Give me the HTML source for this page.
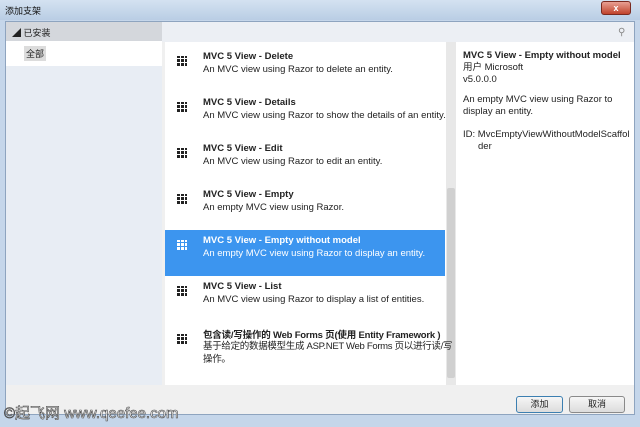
<!DOCTYPE html>
<html><head><meta charset="utf-8"><style>
*{margin:0;padding:0;box-sizing:border-box}
body{width:640px;height:427px;overflow:hidden;background:#c5d6ea;font-family:"Liberation Sans","Noto Sans CJK SC",sans-serif;font-size:9.5px;color:#222;position:relative}
.a{position:absolute}
.t{font-weight:bold;font-size:9.5px}
.icon{width:10px;height:10px;background:repeating-linear-gradient(90deg,#222 0 3px,transparent 3px 4px);}
.icon:after{content:"";position:absolute;inset:0;background:repeating-linear-gradient(0deg,transparent 0 3px,#fff 3px 4px)}
.sel .icon:after{background:repeating-linear-gradient(0deg,transparent 0 3px,#3c95ef 3px 4px)}
.sel .icon{background:repeating-linear-gradient(90deg,#fff 0 3px,transparent 3px 4px)}
.btn{border:1px solid #8a8a8a;border-radius:3px;background:linear-gradient(#f6f6f6,#dcdcdc);text-align:center;line-height:15px;font-size:9px}
</style></head><body>
<div class="a" style="left:0;top:0;width:640px;height:20px;background:linear-gradient(#d4e2f1,#b9cde4)"></div>
<div class="a" style="left:5px;top:4px;font-size:9px;color:#111">添加支架</div>
<div class="a" style="left:601px;top:1px;width:30px;height:14px;border-radius:3px;background:linear-gradient(#e8a093,#c0432c);border:1px solid #7a2a20;color:#fff;font-size:9px;text-align:center;line-height:12px;font-weight:bold">x</div>
<div class="a" style="left:5px;top:21px;width:630px;height:394px;background:#f0f0f0;border:1px solid #8ea4bf"></div>
<div class="a" style="left:6px;top:22px;width:156px;height:363px;background:#e8edf4"></div>
<div class="a" style="left:6px;top:22px;width:156px;height:19px;background:#d4d7dc"></div>
<div class="a" style="left:12px;top:26px;font-size:9px">◢ 已安装</div>
<div class="a" style="left:6px;top:41px;width:156px;height:25px;background:#fff"></div>
<div class="a" style="left:24px;top:46px;padding:1px 2px;background:#dcdcdc;font-size:9px">全部</div>
<div class="a" style="left:162px;top:22px;width:472px;height:20px;background:#eceff4"></div>
<div class="a" style="left:618px;top:27px;font-size:10px;color:#888">⚲</div>
<div class="a" style="left:165px;top:42px;width:281px;height:343px;background:#fff"></div>
<div class="a" style="left:446px;top:42px;width:10px;height:343px;background:#e8e8e8"></div>
<div class="a" style="left:447px;top:188px;width:8px;height:190px;background:#d0d0d0;border-radius:2px"></div>
<div class="a" style="left:456px;top:42px;width:178px;height:343px;background:#fff"></div>
<div class="a" style="left:165px;top:230px;width:280px;height:46px;background:#3c95ef"></div>

<div class="a" style="left:177px;top:56px"><div class="icon a"></div></div>
<div class="a t" style="left:203px;top:51px">MVC 5 View - Delete</div>
<div class="a" style="left:203px;top:64px">An MVC view using Razor to delete an entity.</div>
<div class="a" style="left:177px;top:102px"><div class="icon a"></div></div>
<div class="a t" style="left:203px;top:97px">MVC 5 View - Details</div>
<div class="a" style="left:203px;top:110px">An MVC view using Razor to show the details of an entity.</div>
<div class="a" style="left:177px;top:148px"><div class="icon a"></div></div>
<div class="a t" style="left:203px;top:143px">MVC 5 View - Edit</div>
<div class="a" style="left:203px;top:156px">An MVC view using Razor to edit an entity.</div>
<div class="a" style="left:177px;top:194px"><div class="icon a"></div></div>
<div class="a t" style="left:203px;top:189px">MVC 5 View - Empty</div>
<div class="a" style="left:203px;top:202px">An empty MVC view using Razor.</div>
<div class="a sel" style="left:177px;top:240px"><div class="icon a"></div></div>
<div class="a t" style="left:203px;top:235px;color:#fff">MVC 5 View - Empty without model</div>
<div class="a" style="left:203px;top:248px;color:#fff">An empty MVC view using Razor to display an entity.</div>
<div class="a" style="left:177px;top:286px"><div class="icon a"></div></div>
<div class="a t" style="left:203px;top:281px">MVC 5 View - List</div>
<div class="a" style="left:203px;top:294px">An MVC view using Razor to display a list of entities.</div>
<div class="a" style="left:177px;top:334px"><div class="icon a"></div></div>
<div class="a t" style="left:203px;top:327px;letter-spacing:-0.2px">包含读/写操作的 Web Forms 页(使用 Entity Framework )</div>
<div class="a" style="left:203px;top:340px;width:250px;line-height:13px;letter-spacing:-0.3px">基于给定的数据模型生成 ASP.NET Web Forms 页以进行读/写<br>操作。</div>

<div class="a" style="left:463px;top:50px;line-height:12px">
<div class="t">MVC 5 View - Empty without model</div>
<div>用户 Microsoft</div><div>v5.0.0.0</div>
<div style="margin-top:8px">An empty MVC view using Razor to<br>display an entity.</div>
<div style="margin-top:11px">ID: MvcEmptyViewWithoutModelScaffol</div>
<div style="padding-left:15px">der</div>
</div>

<div class="a btn" style="left:516px;top:396px;width:47px;height:17px;border-color:#3c7fb1">添加</div>
<div class="a btn" style="left:569px;top:396px;width:56px;height:17px">取消</div>
<div class="a" style="left:4px;top:402px;font-size:15px;color:#fff;-webkit-text-stroke:0.6px #444">©起飞网 www.qeefee.com</div>
</body></html>
